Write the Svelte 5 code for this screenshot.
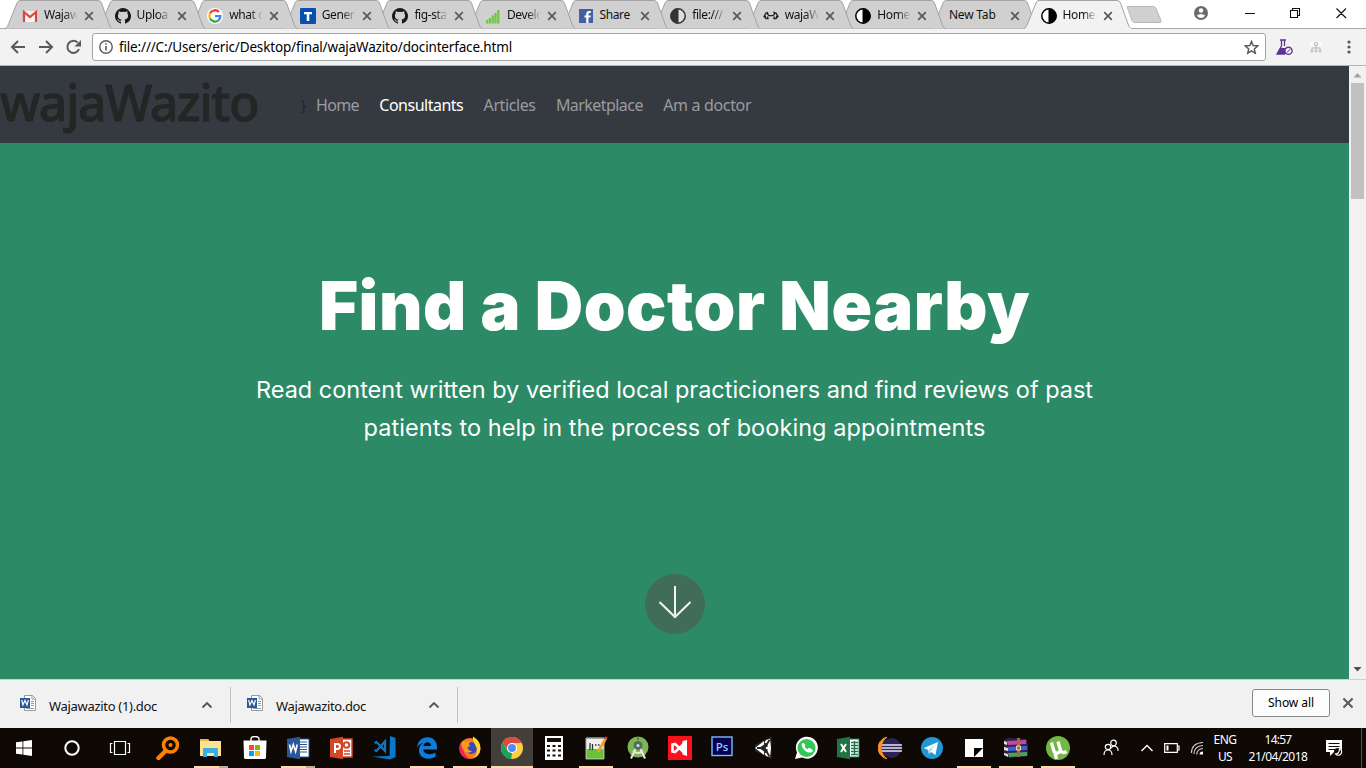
<script>
  const tabs = [
    { icon: 'gmail', title: 'Wajaw' },
    { icon: 'github', title: 'Uploa' },
    { icon: 'google', title: 'what c' },
    { icon: 'tblock', title: 'Gener' },
    { icon: 'github', title: 'fig-sta' },
    { icon: 'bars', title: 'Develo' },
    { icon: 'facebook', title: 'Share', full: true },
    { icon: 'half', title: 'file:///' },
    { icon: 'handshake', title: 'wajaW' },
    { icon: 'halfblack', title: 'Home' },
    { icon: '', title: 'New Tab', full: true },
    { icon: 'halfblack', title: 'Home', active: true }
  ];
  const nav = [
    ['Home', 43], ['Consultants', 84], ['Articles', 52], ['Marketplace', 87], ['Am a doctor', 88]
  ];
  const system = ['windows', 'cortana', 'taskview', 'search'];
  const apps = [
    ['explorer', 'multi'], ['store', ''], ['word', 'multi'], ['powerpoint', ''], ['vscode', ''],
    ['edge', 'run'], ['firefox', 'run'], ['chrome', 'focused'], ['calc', ''], ['notepad', 'run'],
    ['android', ''], ['vs', ''], ['photoshop', ''], ['unity', ''], ['whatsapp', ''], ['excel', ''],
    ['eclipse', ''], ['telegram', ''], ['sticky', 'run'], ['winrar', 'run'], ['utorrent', 'run']
  ];

  // Spreads a line of text over the given width through its letter spacing.
  function fit(node, width) {
    const natural = node.getBoundingClientRect().width;
    node.style.letterSpacing = (width - natural) / node.textContent.length + 'px';
  }
</script>

{#snippet cross(size = 10)}
  <svg class="cross" width={size} height={size} viewBox="0 0 10 10"><path d="M1.2 1.2l7.6 7.6M8.8 1.2L1.2 8.8" stroke="#5a5a5a" stroke-width="1.7" fill="none" /></svg>
{/snippet}

{#snippet favicon(name)}
  <svg class="favicon" width="16" height="16" viewBox="0 0 16 16">
    {#if name === 'gmail'}
      <path d="M1 3h14v11H1z" fill="#eee" /><path d="M3 14V6l5 4 5-4v8z" fill="#f7f5f5" />
      <path d="M2 14V4l6 5 6-5v10" fill="none" stroke="#d8473b" stroke-width="2.2" />
    {:else if name === 'github'}
      <path fill="#191717" d="M8 0a8 8 0 0 0-2.5 15.6c.4.1.5-.2.5-.4v-1.5c-2.2.5-2.7-.9-2.7-.9-.4-.9-.9-1.2-.9-1.2-.7-.5.1-.5.1-.5.8.1 1.2.8 1.2.8.7 1.2 1.9.9 2.3.7.1-.5.3-.9.5-1.1-1.8-.2-3.600-.9-3.600-4 0-.9.3-1.600.8-2.100-.1-.2-.4-1 .1-2.100 0 0 .7-.2 2.200.8a7.500 7.500 0 0 1 4 0c1.500-1 2.200-.8 2.200-.8.5 1.100.2 1.900.1 2.100.5.6.8 1.300.8 2.100 0 3.100-1.900 3.800-3.600 4 .3.200.5.7.5 1.500v2.200c0 .2.1.5.5.4A8 8 0 0 0 8 0z" />
    {:else if name === 'google'}
      <circle cx="8" cy="8" r="8" fill="#fff" />
      <g fill="none" stroke-width="2.3"><path d="M12 4a5.500 5.500 0 0 0-9 1.500" stroke="#ea4335" /><path d="M3 5.500a5.500 5.500 0 0 0 0 5" stroke="#fbbc05" /><path d="M3 10.500a5.500 5.500 0 0 0 8.700 1.600" stroke="#34a853" /><path d="M8 8.200h5.400a5.400 5.400 0 0 1-1.700 3.900" stroke="#4285f4" /></g>
    {:else if name === 'tblock'}
      <rect width="16" height="16" rx="1" fill="#0750ad" /><path d="M4 4h8v2.300H9.300V13H6.700V6.300H4z" fill="#fff" />
    {:else if name === 'bars'}
      <path d="M1 12h2.200v3.500H1zM3.800 10H6v5.500H3.800zM6.600 7.500h2.200v8H6.600zM9.400 5h2.200v10.500H9.400zM12.200 2h2.200v13.500h-2.200z" fill="#6cc644" />
    {:else if name === 'facebook'}
      <rect x="1" y="1" width="14" height="14" fill="#4460a0" /><path d="M8.200 15V9.600H6.500V7.400h1.700V6c0-2 1.100-3 3-3h1.600v2.100h-1.200c-.9 0-1.100.4-1.100 1.200v1.100h2.300l-.3 2.200h-2V15z" fill="#fff" />
    {:else if name === 'half' || name === 'halfblack'}
      <g fill={name === 'half' ? '#333' : '#000'} stroke={name === 'half' ? '#333' : '#000'}><circle cx="8" cy="8" r="7.200" fill={name === 'half' ? '#ddd' : '#fff'} stroke-width="1.500" />
      {#if name === 'half'}<path d="M8 1a7 7 0 0 0 0 14z" />{:else}<path d="M8 1a7 7 0 0 1 0 14z" />{/if}</g>
    {:else if name === 'handshake'}
      <path d="M5 4.500L3 5 1 8.500l2 2h2L4.500 8.500M5 4.500L4.500 6l1.500 1.700h4L11.500 6 11 4.500l2 .5 2 3.500-2 2h-2l.5-2M1.500 8.500H3M13 8.500h1.500" fill="none" stroke="#222" stroke-width="1.300" />
    {/if}
  </svg>
{/snippet}

{#snippet glyph(name)}
  <svg class="glyph" width="24" height="24" viewBox="0 0 24 24">
    {#if name === 'windows'}
      <path fill="#fff" d="M4 6.300l6.500-.9v6.200H4zM11.300 5.300L20 4v7.600h-8.700zM4 12.400h6.500v6.200L4 17.700zM11.300 12.400H20V20l-8.700-1.300z" />
    {:else if name === 'cortana'}
      <circle cx="12" cy="12" r="6.700" fill="none" stroke="#fff" stroke-width="2" />
    {:else if name === 'taskview'}
      <path d="M6.500 5.500h11v13h-11zM4.500 7.500h-2v9h2M19.500 7.500h2v9h-2" fill="none" stroke="#fff" stroke-width="1.200" />
    {:else if name === 'search'}
      <circle cx="14.500" cy="9" r="7" fill="none" stroke="#ff8100" stroke-width="3.500" /><path d="M9.500 15L2.500 22" stroke="#ff8100" stroke-width="4.500" stroke-linecap="round" /><circle cx="14.500" cy="9" r="2" fill="#ff8100" />
    {:else if name === 'explorer'}
      <path d="M1 3h8l1.500 2H22v15H1z" fill="#fde292" /><path d="M1 3h8l1 2H1z" fill="#e8b64b" /><path d="M4 21v-8q0-1 1-1h13q1 0 1 1v8h-4v-4H8v4z" fill="#38aee4" />
    {:else if name === 'store'}
      <path d="M8 5V3q0-2.500 4-2.500T16 3v2" fill="none" stroke="#fff" stroke-width="1.400" /><path d="M.5 4.500h23l-.5 17q0 1.500-1.500 1.500h-19Q1 23 1 21.500z" fill="#fff" /><path fill="#f25022" d="M6 9h5v5H6z" /><path fill="#7fba00" d="M12 9h5v5h-5z" /><path fill="#00a4ef" d="M6 15h5v5H6z" /><path fill="#ffb900" d="M12 15h5v5h-5z" />
    {:else if name === 'word'}
      <path d="M12 3h11v18H12z" fill="#fff" stroke="#2b579a" /><path d="M14 6h7M14 8.500h7M14 11h7M14 13.500h7M14 16h7" stroke="#2b579a" /><path d="M1 3l13-2.200v22.400L1 21z" fill="#2b579a" /><path d="M3.500 8.500l1.500 7 2.300-7 2.300 7 1.600-7" fill="none" stroke="#fff" stroke-width="1.600" />
    {:else if name === 'powerpoint'}
      <path d="M12 3h11v18H12z" fill="#fff" stroke="#d24726" stroke-width="1.500" /><circle cx="17.500" cy="9" r="2.800" fill="none" stroke="#d24726" stroke-width="2" /><path d="M15 15h6M15 18h6" stroke="#d24726" stroke-width="1.400" /><path d="M1 3l13-2.200v22.400L1 21z" fill="#d24726" /><path d="M6 17V8h2.500a2.500 2.500 0 0 1 0 5H6" fill="none" stroke="#fff" stroke-width="2" />
    {:else if name === 'vscode'}
      <path d="M18 0l5.500 2v19L18 23.500 0 20.500l17.500-.500z" fill="#0879cc" /><path d="M2.500 7l2-1 8.500 9V5.500L4.500 15l-2-1" fill="none" stroke="#0879cc" stroke-width="2.200" />
    {:else if name === 'edge'}
      <path fill="#0f7bdc" d="M2 11.500C2.800 5 7 1.300 12.500 1.300c6.300 0 9.500 4.700 9.500 9.700v2.600H8.300c.2 5 7.500 5.800 12.200 3v4.200c-6.300 3.700-16.500 2.200-16.500-6.600 0-4.300 2.500-6.400 4.800-7.700C6 7.200 3.600 8.900 2 11.500zM8.400 10h7.700c0-5.400-7.300-4.900-7.700 0z" />
    {:else if name === 'firefox'}
      <circle cx="12" cy="12.500" r="10.500" fill="#ff7a18" /><path d="M3 6a11 11 0 0 0 9 17C7 20 4 14 6 8z" fill="#f2225b" /><circle cx="13" cy="12" r="6" fill="#3849b5" /><path d="M15 .5c5 3 8 7 7.300 13-.5 5-5 9-9.800 9 5-1 7-5 6.500-9S14 5 15 .5z" fill="#ffd62a" /><path d="M4.500 5l3 1q3-1 5 0l-2 2 2 2-3 1q0 4 5 4-5 4-9-1t-1-9z" fill="#ff9b18" />
    {:else if name === 'chrome'}
      <circle cx="12" cy="12" r="11" fill="#ffcd40" /><path d="M2.500 6.500A11 11 0 0 1 21.800 7H12L7.700 14.500z" fill="#dd4b3e" /><path d="M2.500 6.500l5.200 8.200L12 17l-.8 6A11 11 0 0 1 2.500 6.500z" fill="#1aa15f" /><circle cx="12" cy="12" r="5.100" fill="#fff" /><circle cx="12" cy="12" r="4" fill="#4e8df5" />
    {:else if name === 'calc'}
      <path d="M3 0h18v24H3z" fill="#fff" /><path d="M5 2h14v4H5zM5 9h3v2H5zM10.500 9h3v2h-3zM16 9h3v2h-3zM5 13.500h3v2H5zM10.500 13.500h3v2h-3zM16 13.500h3v2h-3zM5 18.500h3v2H5zM10.500 18.500h3v2h-3zM16 18.500h3v2h-3z" fill="#161109" />
    {:else if name === 'notepad'}
      <path d="M2 2h18v21H2z" fill="#eee" stroke="#a8aaa4" /><path d="M2.500 13h17v9.500h-17z" fill="#68c334" /><path d="M3 2h16" stroke="#888" stroke-width="2" stroke-dasharray="1.500 1" /><path d="M6 14V7M8.500 14V8M11 9h1.500M14 9h1.500" stroke="#333" fill="none" stroke-width="1.300" /><path d="M22 2l-8 14" stroke="#e6a52a" stroke-width="2.700" /><path d="M22.500 1l-1 2" stroke="#c33" stroke-width="3" />
    {:else if name === 'android'}
      <circle cx="12" cy="11" r="10.500" fill="#7cb554" /><path d="M12 1v3" stroke="#666" stroke-width="1.500" /><circle cx="12" cy="9.500" r="4.500" fill="#566b68" /><circle cx="12" cy="9.500" r="1.500" fill="#ddd" /><path d="M9.500 13L5 22.500M14.500 13l4.500 9.500M7 15q5 4 10 0" fill="none" stroke="#e8e8e8" stroke-width="2" />
    {:else if name === 'vs'}
      <path d="M0 0h24v24H0z" fill="#f9111d" /><path d="M4.500 8.500v7L7 16l8-7.500v7L7 8z" fill="none" stroke="#fff" stroke-width="2.600" /><path d="M14.500 5l4.500-1v16l-4.500-1.500z" fill="#fff" />
    {:else if name === 'photoshop'}
      <rect x="2" y="1" width="20" height="18.500" fill="#060052" stroke="#78bff5" stroke-width="1.400" /><text x="12" y="14.500" text-anchor="middle" font-family="Open Sans, sans-serif" font-size="11.500" font-weight="600" fill="#8dccff">Ps</text>
    {:else if name === 'unity'}
      <path d="M19.500.5L3 9v6l16.500 8z" fill="#292929" /><path d="M3 12L12 5v3.500L8.500 11H18V13H8.500l3.500 2.500V19z" fill="#fff" /><path d="M14 4l4-1 1 9-1 9-4-1-1.500-2.500 3-1.500V8l-3-1.500z" fill="#fff" /><path d="M5 12h7.500l5-8M12.500 12l5 8.500" stroke="#242424" stroke-width="1.800" fill="none" />
    {:else if name === 'whatsapp'}
      <path d="M1 23l2-6.500A11 11 0 1 1 8 21.500z" fill="#fff" /><circle cx="12.500" cy="12" r="9" fill="#33c557" /><path d="M8.500 7q-2 2 1 6t7 3.500 1-3.500l-2.500-1.200-1.500 1.500q-2-.800-3-3l1-1.300L9.500 7z" fill="#fff" />
    {:else if name === 'excel'}
      <path d="M12 3h11v18H12z" fill="#fff" stroke="#217346" /><path d="M15 6.500h7M15 9.500h7M15 12.500h7M15 15.500h7M15 18.500h7M18.500 5v14" stroke="#217346" stroke-width="1.300" /><path d="M1 3l13-2.200v22.400L1 21z" fill="#217346" /><path d="M5 8l5 8M10 8l-5 8" stroke="#fff" stroke-width="1.900" />
    {:else if name === 'eclipse'}
      <path d="M9 1.200a11 11 0 0 0 0 21.600A13 13 0 0 1 9 1.200z" fill="#f7941e" stroke="#f7941e" /><circle cx="13.500" cy="12" r="10" fill="#2c2255" /><path d="M4 9h20M3.500 12H24M4 15h20" stroke="#e7e4f2" stroke-width="1.600" />
    {:else if name === 'telegram'}
      <circle cx="12" cy="12" r="11" fill="#2197d4" /><path d="M4 12l14-6-2.500 13-4.500-3-2 2-.800-4z" fill="#fff" /><path d="M8.200 14L15 9l-4 6-2 3z" fill="#b7d8ec" />
    {:else if name === 'sticky'}
      <path d="M3 3h18v9h-9v9H3z" fill="#fff" /><path d="M12.500 12.500H21L12.500 21z" fill="#050505" /><path d="M21 12v9h-9z" fill="#fff" />
    {:else if name === 'winrar'}
      <path d="M0 4l4-2 19 1v4l1 1v12l-19 2-5-3z" fill="#34224c" /><path d="M3 5l19-1v4L4 9z" fill="#c249a5" /><path d="M4 11l19-1v4L4 15z" fill="#435fd7" /><path d="M4 17l19-1v4L5 21z" fill="#47a55b" /><path d="M0 5l3 1v3L0 8zM0 11l4 1v3l-4-1zM0 17l4 1v3l-4-2z" fill="#e8ded8" /><path d="M13 2h3v19h-3z" fill="#a46b36" /><path d="M12.500 10h4v4h-4z" fill="none" stroke="#e7dbbd" />
    {:else if name === 'utorrent'}
      <circle cx="12" cy="12" r="12" fill="#72b643" /><path d="M5.500 6.500l2.500 9q3 4 6.500-1l-2.500-9 2.500 9q2 3.500 6 1M8.500 15l2 8" fill="none" stroke="#fff" stroke-width="3.300" />
    {/if}
  </svg>
{/snippet}

{#snippet docIcon()}
  <svg width="17" height="17" viewBox="0 0 17 17"><path d="M4.500.5h8l3 3v12h-11z" fill="#fff" stroke="#999" /><path d="M12 .500V4h3.500" fill="none" stroke="#999" /><path d="M11 6.500h3M11 8.500h3M11 10.500h3M6 13.500h8" stroke="#8b9aaf" /><path d="M0 3h10v10H0z" fill="#2a5699" /><path d="M1.700 5l1.200 5L5 5.500 7 10l1.400-5" fill="none" stroke="#fff" stroke-width="1.200" /></svg>
{/snippet}

<div class="screen">
  <header class="tabstrip">
    <div class="tabs">
      {#each tabs as tab, i}
        <div class="tab" class:active={tab.active} style:z-index={tab.active ? 30 : 20 - i}>
          <svg class="shape" width="108" height="30" viewBox="0 0 108 30">
            <path d="M0 28.500C2 27.500 2.500 26 3.500 24L12 3Q13 .5 15 .5H93Q95.500.5 96.500 3L104 24Q105 27.500 107 28.500" fill={tab.active ? '#f2f2f2' : '#d0d0d0'} stroke="#a3a3a3" />
            {#if tab.active}<path d="M1 29h106" stroke="#f2f2f2" stroke-width="2" />{/if}
          </svg>
          {#if tab.icon}{@render favicon(tab.icon)}{/if}
          <span class="title" class:full={tab.full} class:wide={!tab.icon}>{tab.title}</span>
          {@render cross()}
        </div>
      {/each}
    </div>
    <svg class="newtab" width="36" height="18" viewBox="0 0 36 18"><path d="M1 .5h26q2 0 3 2l5 12q.5 2-1 2H9q-2 0-3-2z" fill="#d0d0d0" stroke="#b7b7b7" /></svg>
    <svg class="user" width="14" height="14" viewBox="0 0 14 14"><circle cx="7" cy="7" r="7" fill="#6b6b6b" /><circle cx="7" cy="4.500" r="2.200" fill="#fff" /><path d="M2.800 9.500q4.200-3.200 8.400 0Q9.500 12 7 12T2.800 9.500z" fill="#fff" /></svg>
    <svg class="winctl" width="102" height="12" viewBox="0 0 102 12"><path d="M0 6.500h10M45.500 3.500h7v7h-7zM47.500 3V1.500h7v7H53M91.500 1.500l9.500 9.500M101 1.500L91.500 11" fill="none" stroke="#111" stroke-width="1.100" /></svg>
  </header>

  <div class="toolbar">
    <svg class="navicons" width="72" height="16" viewBox="0 0 72 16"><g fill="none" stroke="#5a5a5a" stroke-width="2"><path d="M15 8H2M8 2L2 8l6 6M29 8h13M36 2l6 6-6 6M67.500 3.500A6 6 0 1 0 69 10" /></g><path d="M71 1v6.500h-6.500z" fill="#5a5a5a" /></svg>
    <div class="omnibox">
      <svg width="14" height="14" viewBox="0 0 14 14"><circle cx="7" cy="7" r="6.200" fill="none" stroke="#5a5a5a" stroke-width="1.400" /><path d="M7 6v4.500M7 3.200v1.600" stroke="#5a5a5a" stroke-width="1.600" /></svg>
      <div class="url"><span use:fit={393}>file:///C:/Users/eric/Desktop/final/wajaWazito/docinterface.html</span></div>
      <svg width="15" height="15" viewBox="0 0 15 15"><path d="M7.500 1.500l1.700 4 4.500.4-3.400 3 1 4.400-3.800-2.400-3.800 2.400 1-4.400-3.400-3 4.500-.400z" fill="none" stroke="#555" stroke-width="1.400" /></svg>
    </div>
    <svg class="flask" width="17" height="17" viewBox="0 0 17 17"><path d="M4 1h6M5.500 1v6L1 15h8M8.500 1v6" fill="none" stroke="#5f3295" stroke-width="1.300" /><path d="M4 9h5l1 6H1z" fill="#5f3295" /><circle cx="12.500" cy="11.800" r="3.600" fill="#f2f2f2" stroke="#5f3295" stroke-width="1.400" /><path d="M11 13.500l3-3.300" stroke="#5f3295" /></svg>
    <svg class="sitemap" width="12" height="12" viewBox="0 0 12 12"><rect width="12" height="12" fill="#fafafa" /><g fill="none" stroke="#c4c4c4" stroke-width="1.300"><circle cx="6" cy="3" r="1.700" /><path d="M6 5v4M2 9V7h8v2" /><circle cx="2" cy="10" r="1" /><circle cx="6" cy="10" r="1" /><circle cx="10" cy="10" r="1" /></g></svg>
    <svg class="dots" width="4" height="14" viewBox="0 0 4 14" fill="#555"><circle cx="2" cy="2" r="1.600" /><circle cx="2" cy="7" r="1.600" /><circle cx="2" cy="12" r="1.600" /></svg>
  </div>

  <main>
    <div class="page">
      <nav>
        <div class="brand"><span use:fit={258}>wajaWazito</span></div>
        <span class="brace">&#125;</span>
        {#each nav as [label, width], i}
          <a href="#{label}" class:here={i === 1} style:width="{width}px"><span use:fit={width}>{label}</span></a>
        {/each}
      </nav>
      <section>
        <h1><span use:fit={711}>Find a Doctor Nearby</span></h1>
        <p><span use:fit={837}>Read content written by verified local practicioners and find reviews of past</span></p>
        <p><span use:fit={622}>patients to help in the process of booking appointments</span></p>
        <div class="down"><svg width="34" height="36" viewBox="0 0 34 36"><path d="M17 0v29M1.500 16L17 31l15.500-15" fill="none" stroke="#f0f4f2" stroke-width="2" /></svg></div>
      </section>
    </div>
    <div class="scrollbar">
      <svg width="9" height="5" viewBox="0 0 9 5"><path d="M4.500 0L8.500 4.500H.5z" fill="#a3a3a3" /></svg>
      <div class="thumb"></div>
      <svg width="9" height="5" viewBox="0 0 9 5"><path d="M.5 0h8L4.500 4.500z" fill="#505050" /></svg>
    </div>
  </main>

  <div class="downloads">
    {#each [['Wajawazito (1).doc', 108], ['Wajawazito.doc', 90]] as [name, width]}
      <div class="file">
        {@render docIcon()}
        <div class="name"><span use:fit={width}>{name}</span></div>
        <svg width="12" height="8" viewBox="0 0 12 8"><path d="M1.500 6.500L6 2l4.500 4.500" fill="none" stroke="#555" stroke-width="1.800" /></svg>
      </div>
    {/each}
    <button><span use:fit={46}>Show all</span></button>
    {@render cross(12)}
  </div>

  <footer>
    {#each system as name}<div class="sys">{@render glyph(name)}</div>{/each}
    <div class="apps">
      {#each apps as [name, state]}<div class="app {state}">{@render glyph(name)}</div>{/each}
    </div>
    <div class="tray">
      <svg width="16" height="18" viewBox="0 0 16 18"><g fill="none" stroke="#fff" stroke-width="1.200"><circle cx="10.500" cy="4" r="2.800" /><circle cx="5" cy="8" r="2.700" /><path d="M1 16q0-5 4-5t4 5M8 9q2.500-3 5-1.500T15 12" /></g></svg>
      <svg class="up" width="14" height="8" viewBox="0 0 14 8"><path d="M1.500 7L7 1.500 12.500 7" fill="none" stroke="#fff" stroke-width="1.400" /></svg>
      <svg class="battery" width="16" height="10" viewBox="0 0 16 10"><path d="M.7.700h12.600v8.600H.7zM13 3h2v4h-2" fill="none" stroke="#fff" stroke-width="1.200" /><path d="M2.500 2.500h2v5h-2z" fill="#fff" /></svg>
      <svg class="wifi" width="14" height="14" viewBox="0 0 14 14"><g fill="none" stroke="#ccc" stroke-width="1.200"><path d="M1.500 12Q1.500 2 13 1.500M4 13Q4 5 13 4.500M6.700 13.500Q7 8 13 7.500" /></g><path d="M9.500 13.500q0-3 3.500-3v3z" fill="#fff" /></svg>
      <div class="two lang"><div><span use:fit={23}>ENG</span></div><div><span use:fit={14}>US</span></div></div>
      <div class="two clock"><div><span use:fit={27}>14:57</span></div><div><span use:fit={59}>21/04/2018</span></div></div>
      <svg class="note" width="18" height="18" viewBox="0 0 18 18"><path d="M1 1h16v12H9l-4 4v-4H1z" fill="#fff" /><path d="M3.500 4.500h11M3.500 7.500h11M3.500 10.500h7" stroke="#120c08" stroke-width="1.200" /><circle cx="13" cy="13" r="4" fill="#120c08" /><path d="M14.500 9.500a3.500 3.500 0 1 1-4 5.500q4 0 4-5.500z" fill="none" stroke="#fff" stroke-width="1.200" /></svg>
      <div class="peek"></div>
    </div>
  </footer>
</div>

<style>
  :global(body) { margin: 0; overflow: hidden; }
  * { box-sizing: border-box; }
  svg { display: block; flex: none; }
  span { white-space: nowrap; }
  .screen { width: 1366px; height: 768px; display: flex; flex-direction: column; font-family: "Noto Sans", "Open Sans", sans-serif; font-size: 12px; color: #111; background: #fff; overflow: hidden; }

  .tabstrip { height: 29px; flex: none; display: flex; border-bottom: 1px solid #aaa; isolation: isolate; }
  .tabs { display: flex; padding-left: 5px; width: 1126px; height: 29px; flex: none; }
  .tab { position: relative; width: 92.600px; flex: none; height: 29px; display: flex; align-items: center; padding: 2px 0 0 17px; }
  .shape { position: absolute; left: 0; top: 0; }
  .favicon { position: relative; margin-right: 6px; }
  .title { position: relative; width: 34px; margin-right: 6px; font-size: 12px; line-height: 16px; margin-top: -2px; letter-spacing: -0.400px; -webkit-mask-image: linear-gradient(90deg, #000 60%, transparent 100%); mask-image: linear-gradient(90deg, #000 60%, transparent 100%); }
  .title.full { -webkit-mask-image: none; mask-image: none; }
  .title.wide { width: 56px; letter-spacing: -0.200px; margin-left: 1px; margin-right: 5px; }
  .cross { position: relative; }
  .newtab { margin: 6px 0 0 0; }
  .user { margin: 6px 0 0 32px; }
  .winctl { margin: 7px 0 0 37px; }

  .toolbar { height: 37px; flex: none; display: flex; align-items: center; background: #f2f2f2; border-bottom: 1px solid #b4b4b4; padding-left: 10px; }
  .omnibox { width: 1174px; height: 28px; margin-left: 10px; border: 1px solid #a5a5a5; border-radius: 3px; background: #fff; display: flex; align-items: center; padding: 0 6px; }
  .url { flex: 1; margin-left: 6px; font-size: 13.500px; color: #000; line-height: 20px; }
  .flask { margin-left: 10px; }
  .sitemap { margin-left: 17px; }
  .dots { margin-left: 25px; }

  main { height: 613px; flex: none; display: flex; }
  .page { width: 1349px; background: #2c8a66; display: flex; flex-direction: column; }
  nav { height: 77px; background: #353a41; display: flex; align-items: center; color: #252525; }
  .brand { width: 301px; font-size: 50px; font-weight: 500; line-height: 76px; margin-top: -5px; -webkit-text-stroke: 0.800px #252525; }
  .brace { width: 15px; font-size: 14px; }
  nav a { display: block; margin-right: 20.300px; font-size: 16px; line-height: 24px; padding-top: 1px; color: #9a9c9f; text-decoration: none; }
  nav a.here { color: #fff; }
  section { display: flex; flex-direction: column; align-items: center; color: #fff; font-family: Inter, Roboto, sans-serif; padding-top: 127px; }
  h1 { margin: 0 0 29px; font-size: 67px; line-height: 72px; font-weight: 900; }
  p { margin: 0; font-size: 23.500px; line-height: 38px; }
  .down { width: 60px; height: 60px; margin-top: 127px; border-radius: 50%; background: #416c58; display: flex; align-items: center; justify-content: center; }
  .scrollbar { width: 17px; background: #f1f1f1; display: flex; flex-direction: column; align-items: center; padding: 7px 0; }
  .thumb { width: 13px; height: 116px; margin: 5px 0 auto; background: #c1c1c1; }

  .downloads { height: 49px; flex: none; display: flex; align-items: center; background: #f1f1f1; border-top: 1px solid #d0d0d0; }
  .file { width: 227px; height: 36px; margin-top: 1px; border-right: 1px solid #c1c1c1; display: flex; align-items: center; padding: 0 17px 0 16px; }
  .file:first-child { width: 231px; padding-left: 20px; }
  .name { flex: 1; font-size: 13px; margin: 3px 0 0 12px; }
  .file > svg:first-child { margin-bottom: 3px; }
  button { width: 78px; height: 28px; margin: 0 12px 2px auto; padding: 0 0 2px; border: 1px solid #888; border-radius: 3px; background: #fdfdfd; font: inherit; color: #000; }
  .downloads > .cross { margin: 0 12px 2px 0; }

  footer { height: 40px; flex: none; display: flex; background: #0e0905; color: #fff; }
  .sys, .app { display: flex; align-items: center; justify-content: center; height: 40px; flex: none; }
  .sys { width: 48px; }
  .apps { display: flex; flex: none; margin-left: -3px; }
  .app { width: 42px; background-repeat: no-repeat; background-position: 50% 100%; background-size: 34px 2px; }
  .app:nth-child(-n + 7) { width: 43px; }
  .app:first-child { width: 44px; }
  .run { background-image: linear-gradient(#fed9b0, #fed9b0); }
  .multi { background-image: linear-gradient(90deg, #fed9b0 74%, #c5a98b 74%); }
  .focused { background-color: #423e3a; background-image: linear-gradient(#fed9b0, #fed9b0); background-size: 100% 2px; }
  .tray { flex: 1; display: flex; align-items: center; padding-left: 24px; }
  .up { margin-left: 21px; }
  .battery { margin-left: 10px; }
  .wifi { margin-left: 10px; }
  .two { display: flex; flex-direction: column; align-items: center; font-size: 12px; line-height: 17px; margin-top: -1px; }
  .lang { width: 24px; margin-left: 9px; }
  .clock { width: 60px; margin-left: 11px; }
  .note { margin-left: 17px; }
  .peek { width: 1px; height: 40px; margin: 0 4px 0 auto; background: #55504c; }
</style>
